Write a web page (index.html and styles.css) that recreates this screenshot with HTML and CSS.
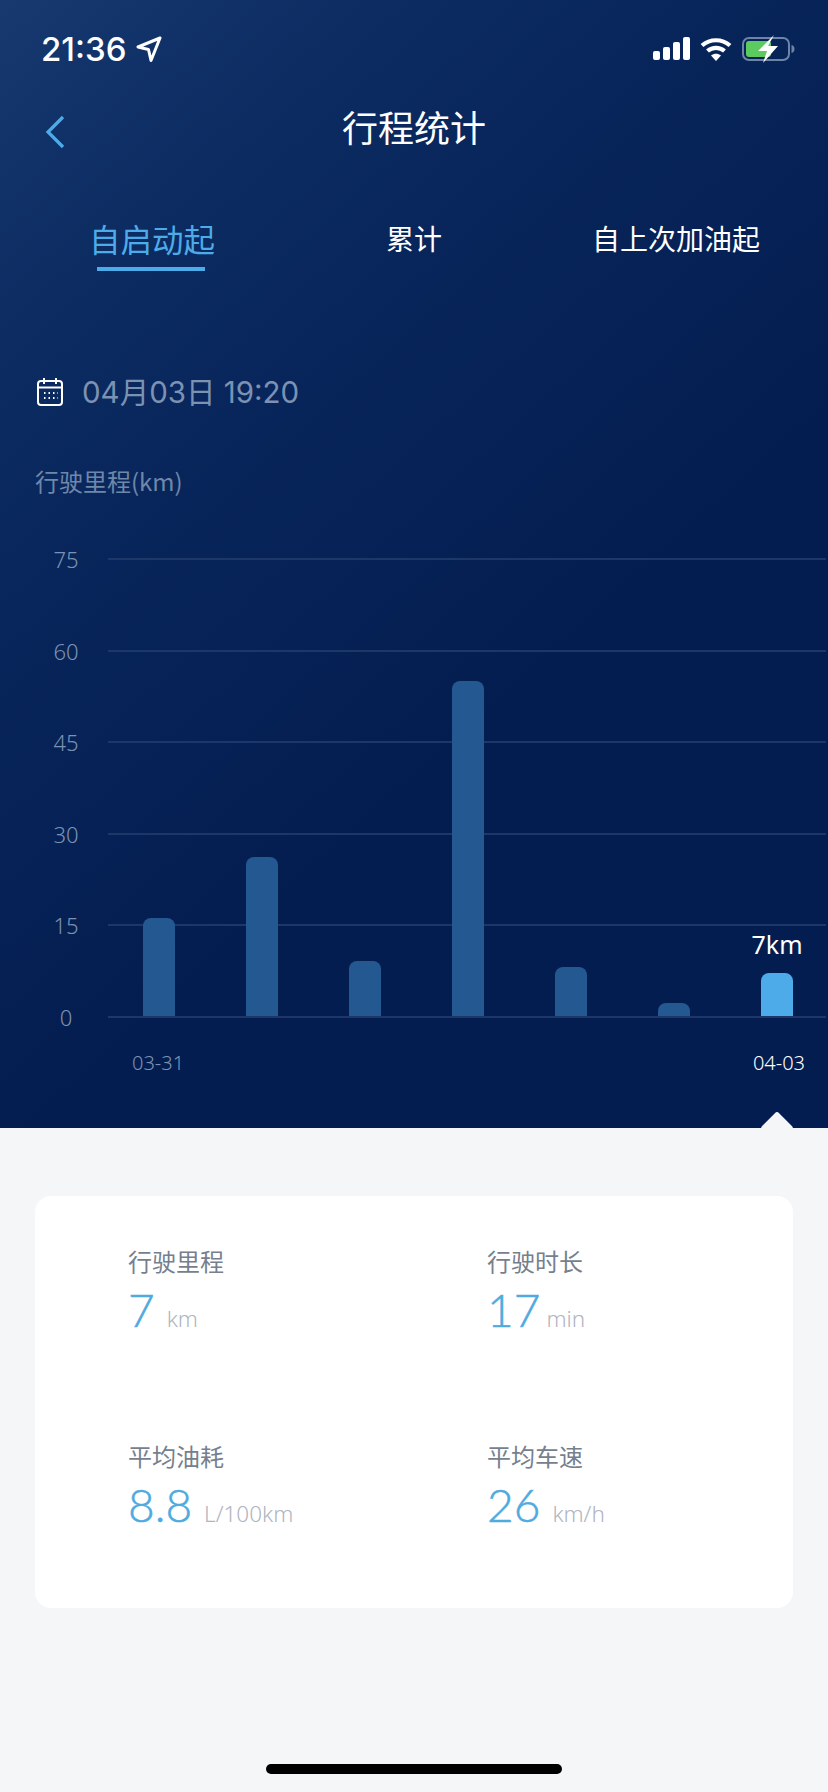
FILE: index.html
```html
<!DOCTYPE html>
<html lang="zh-CN">
<head>
  <meta charset="UTF-8">
  <meta name="viewport" content="width=device-width, initial-scale=1.0">
  <title>行程统计</title>
  <link rel="stylesheet" href="styles.css">
</head>
<body>
  <div class="screen">
    <div class="hero">

      <!-- Status bar -->
      <div class="status">
        <div class="status-left">
          <span class="time">21:36</span>
          <svg width="26" height="26" viewBox="0 0 26 26"><path d="M24 2 2 11l10.500 2.500L15 24.500z" fill="none" stroke="#fff" stroke-width="3" stroke-linejoin="round"/></svg>
        </div>
        <div class="status-right">
          <svg width="37" height="24" viewBox="0 0 37 24" fill="#fff">
            <rect x="0" y="14" width="7" height="9" rx="2"/>
            <rect x="10" y="10" width="7" height="13" rx="2"/>
            <rect x="20" y="5" width="7" height="18" rx="2"/>
            <rect x="30" y="0" width="7" height="23" rx="2"/>
          </svg>
          <svg width="32" height="24" viewBox="0 0 32 24" fill="none" stroke="#fff" stroke-width="4.200">
            <path d="M2 8.500C10 1.500 22 1.500 30 8.500"/>
            <path d="M7.500 14c5-4.300 12-4.300 17 0"/>
            <path d="M11 18.500l5 5.500 5-5.500c-3-2.500-7-2.500-10 0z" fill="#fff" stroke="none"/>
          </svg>
          <svg width="54" height="28" viewBox="0 0 54 28">
            <rect x="1" y="3" width="46" height="22" rx="6" fill="none" stroke="#6e84a6" stroke-width="2"/>
            <path d="M49.500 10c2 .5 3 2 3 4s-1 3.500-3 4z" fill="#6e84a6"/>
            <rect x="4" y="6" width="25" height="16" rx="3" fill="#5ccb5f"/>
            <path d="M32 0 16 16h9l-4 12 15-17h-10z" fill="#fff"/>
          </svg>
        </div>
      </div>

      <!-- Nav -->
      <div class="nav">
        <svg class="back" width="20" height="34" viewBox="0 0 20 34"><path d="M18 2 3 17l15 15" fill="none" stroke="#4dabe9" stroke-width="3.200"/></svg>
        <h1>行程统计</h1>
      </div>

      <!-- Tabs -->
      <div class="tabs">
        <div class="tab active"><span>自启动起</span></div>
        <div class="tab"><span>累计</span></div>
        <div class="tab"><span>自上次加油起</span></div>
      </div>

      <div class="date-row">
        <svg width="28" height="30" viewBox="0 0 28 30" fill="none" stroke="#fff" stroke-width="2">
          <rect x="2" y="4" width="24" height="24" rx="3"/>
          <path d="M2 10.500h24M8 1v6M20 1v6"/>
          <path d="M8 16h1.500M12.500 16H14M17 16h1.500M21 16h.5M8 21h1.500M12.500 21H14M17 21h1.500M21 21h.5" stroke-width="1.800"/>
        </svg>
        <span>04月03日 19:20</span>
      </div>

      <div class="chart-title">行驶里程(km)</div>

      <!-- Chart -->
      <div class="chart">
        <div class="grid-row"><span class="y-label">75</span><i class="grid-line"></i></div>
        <div class="grid-row"><span class="y-label">60</span><i class="grid-line"></i></div>
        <div class="grid-row"><span class="y-label">45</span><i class="grid-line"></i></div>
        <div class="grid-row"><span class="y-label">30</span><i class="grid-line"></i></div>
        <div class="grid-row"><span class="y-label">15</span><i class="grid-line"></i></div>
        <div class="grid-row"><span class="y-label">0</span><i class="grid-line"></i></div>

        <div class="bars">
          <div class="bar" style="height: 98px"></div>
          <div class="bar" style="height: 159px"></div>
          <div class="bar" style="height: 55px"></div>
          <div class="bar" style="height: 335px"></div>
          <div class="bar" style="height: 49px"></div>
          <div class="bar" style="height: 13px"></div>
          <div class="bar current" style="height: 43px"><span class="bar-value">7km</span></div>
        </div>
      </div>

      <div class="x-labels">
        <span>03-31</span>
        <span class="current">04-03</span>
      </div>

      <div class="pointer"></div>
    </div>

    <div class="panel">
      <div class="card">
        <div class="stat">
          <div class="stat-label">行驶里程</div>
          <div class="stat-value">7<small>km</small></div>
        </div>
        <div class="stat">
          <div class="stat-label">行驶时长</div>
          <div class="stat-value">17<small class="tight">min</small></div>
        </div>
        <div class="stat">
          <div class="stat-label">平均油耗</div>
          <div class="stat-value">8.8<small>L/100km</small></div>
        </div>
        <div class="stat">
          <div class="stat-label">平均车速</div>
          <div class="stat-value">26<small>km/h</small></div>
        </div>
      </div>
      <div class="home-bar"></div>
    </div>
  </div>
</body>
</html>
```

FILE: styles.css
```css
body {
  margin: 0;
  font-family: "Noto Sans CJK SC", "Noto Sans", sans-serif;
  background: #f5f6f8;
}

.screen {
  width: 828px;
  height: 1792px;
  display: flex;
  flex-direction: column;
  overflow: hidden;
}

.hero {
  position: relative;
  height: 1128px;
  flex-shrink: 0;
  overflow: hidden;
  color: #fff;
  background: linear-gradient(138deg, #17396f 0%, #0c2c62 18%, #072459 38%, #041d50 62%, #041d50 100%);
}

/* Status bar */
.status {
  height: 88px;
  box-sizing: border-box;
  padding: 35px 32px 0 41px;
  display: flex;
  justify-content: space-between;
  align-items: flex-start;
}

.status-left {
  display: flex;
  align-items: center;
  gap: 9px;
  height: 28px;
}

.time {
  font-family: "Inter", sans-serif;
  font-size: 33px;
  font-weight: 500;
}

.status-right {
  display: flex;
  align-items: center;
  gap: 10px;
  height: 28px;
}

/* Nav */
.nav {
  position: relative;
  height: 76px;
  padding-bottom: 4px;
  display: flex;
  align-items: center;
  justify-content: center;
}

.nav h1 {
  margin: 0;
  font-size: 36px;
  font-weight: 400;
}

.back {
  position: absolute;
  left: 45px;
  top: 27px;
}

/* Tabs */
.tabs {
  display: grid;
  grid-template-columns: repeat(3, 262px);
  padding: 50px 0 0 21px;
}

.tab {
  text-align: center;
  font-size: 28px;
  line-height: 40px;
}

.tab span {
  display: inline-block;
}

.tab.active {
  color: #4dabe9;
  font-size: 31.5px;
}

.tab.active span {
  position: relative;
  padding-bottom: 13px;
}

.tab.active span::after {
  content: "";
  position: absolute;
  left: 8px;
  right: 10px;
  bottom: 0;
  height: 4px;
  background: #4dabe9;
}

.date-row {
  display: flex;
  align-items: center;
  gap: 18px;
  margin-top: 101px;
  padding-left: 36px;
  font-family: "Inter", "Noto Sans CJK SC", sans-serif;
  font-size: 29.5px;
  line-height: 40px;
  color: #7c92b2;
}

.chart-title {
  margin-top: 51px;
  padding-left: 35px;
  font-size: 24px;
  line-height: 36px;
  color: #6f87a8;
}

/* Chart */
.chart {
  position: relative;
  margin-top: 48px;
  height: 482px;
  display: flex;
  flex-direction: column;
  justify-content: space-between;
}

.grid-row {
  height: 24px;
  display: flex;
  align-items: center;
}

.y-label {
  width: 84px;
  margin-left: 24px;
  text-align: center;
  font-family: "Noto Sans", sans-serif;
  font-size: 22px;
  font-weight: 300;
  color: #7c92b2;
}

.grid-line {
  flex: 1;
  height: 2px;
  margin-right: 2px;
  background: #1c3768;
}

.bars {
  position: absolute;
  left: 143px;
  top: 12px;
  bottom: 13px;
  display: flex;
  align-items: flex-end;
  gap: 71px;
}

.bar {
  position: relative;
  width: 32px;
  border-radius: 8px 8px 0 0;
  background: #245891;
}

.bar.current {
  background: #4dabe9;
}

.bar-value {
  position: absolute;
  bottom: 100%;
  left: 50%;
  margin-bottom: 12px;
  transform: translateX(-50%);
  font-family: "Noto Sans", sans-serif;
  font-size: 25px;
  color: #fff;
}

.x-labels {
  display: flex;
  justify-content: space-between;
  margin-top: 22px;
  padding: 0 23px 0 132px;
  font-family: "Noto Sans", sans-serif;
  font-size: 20px;
  font-weight: 300;
  line-height: 24px;
  color: #7c92b2;
}

.x-labels .current {
  color: #fff;
}

.pointer {
  position: absolute;
  right: 39px;
  bottom: -12px;
  width: 24px;
  height: 24px;
  border-radius: 3px;
  transform: rotate(45deg);
  background: #f5f6f8;
}

/* Bottom panel */
.panel {
  flex: 1;
  display: flex;
  flex-direction: column;
  padding: 68px 35px 0;
  background: #f5f6f8;
}

.card {
  height: 412px;
  box-sizing: border-box;
  display: grid;
  grid-template-columns: 359px 1fr;
  grid-auto-rows: 195px;
  padding: 49px 0 0 93px;
  border-radius: 16px;
  background: #fff;
}

.stat-label {
  font-size: 24px;
  line-height: 32px;
  color: #767f8e;
}

.stat-value {
  margin-top: 8px;
  font-family: "Lato", sans-serif;
  font-size: 46px;
  font-weight: 300;
  line-height: 50px;
  color: #4faae0;
  -webkit-text-stroke: 0.5px #4faae0;
}

.stat-value small {
  margin-left: 12px;
  font-family: "Noto Sans", sans-serif;
  font-size: 22.5px;
  font-weight: 300;
  color: #b0b5c0;
  -webkit-text-stroke: 0;
}

.stat-value small.tight {
  margin-left: 6px;
}

.home-bar {
  align-self: center;
  width: 296px;
  height: 10px;
  margin-top: auto;
  margin-bottom: 18px;
  border-radius: 5px;
  background: #000;
}
```
